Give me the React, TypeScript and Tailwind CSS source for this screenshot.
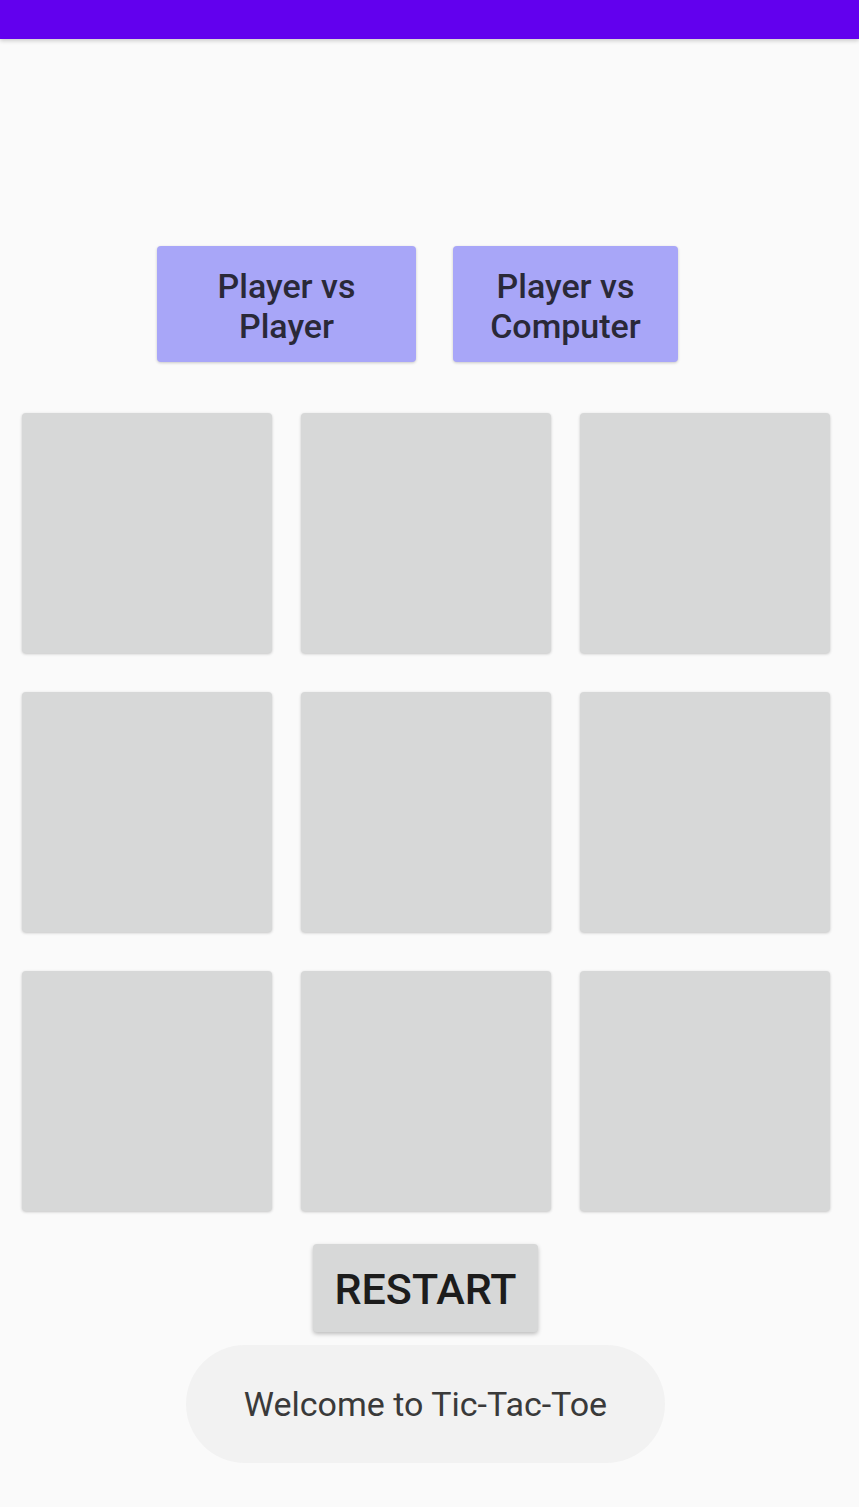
import React from 'react';

const cells = Array.from({ length: 9 }, (_, i) => i);

export default function App() {
    return (
        <div className="min-h-[1507px] w-[859px] bg-[#fafafa] flex flex-col" style={{ fontFamily: 'Roboto, "Noto Sans", sans-serif' }}>
            {/* status bar */}
            <div className="w-full h-[39px] bg-[#6200ee] shadow-[0_2px_4px_rgba(0,0,0,0.18)]" />

            <div className="w-[851px] flex flex-col items-center">
                {/* mode buttons */}
                <div className="mt-[207px] mr-[16px] flex gap-[37px]">
                    <button className="w-[259px] h-[116px] pt-[3px] rounded-[4px] bg-[#a8a6f8] text-[#2a2938] text-[34px] leading-[40px] font-medium shadow-[0_1px_3px_rgba(0,0,0,0.2)]">
                        Player vs<br />Player
                    </button>
                    <button className="w-[225px] h-[116px] pt-[3px] rounded-[4px] bg-[#a8a6f8] text-[#2a2938] text-[34px] leading-[40px] font-medium shadow-[0_1px_3px_rgba(0,0,0,0.2)]">
                        Player vs<br />Computer
                    </button>
                </div>

                {/* board */}
                <div className="mt-[51px] grid grid-cols-[250px_250px_250px] gap-x-[29px] gap-y-[39px]">
                    {cells.map((c) => (
                        <div key={c} className="h-[240px] rounded-[4px] bg-[#d7d8d8] shadow-[0_1px_3px_rgba(0,0,0,0.22)]" />
                    ))}
                </div>

                {/* restart */}
                <button className="mt-[33px] w-[225px] h-[88px] pt-[2px] rounded-[4px] bg-[#d7d8d8] text-[#1c1c1c] text-[43px] font-medium shadow-[0_2px_4px_rgba(0,0,0,0.25)]">
                    RESTART
                </button>

                {/* toast */}
                <div className="mt-[13px] w-[479px] h-[118px] rounded-full bg-[#f2f2f2] flex items-center justify-center text-[34px] text-[#3a3a3a]">
                    Welcome to Tic-Tac-Toe
                </div>
            </div>
        </div>
    );
}
